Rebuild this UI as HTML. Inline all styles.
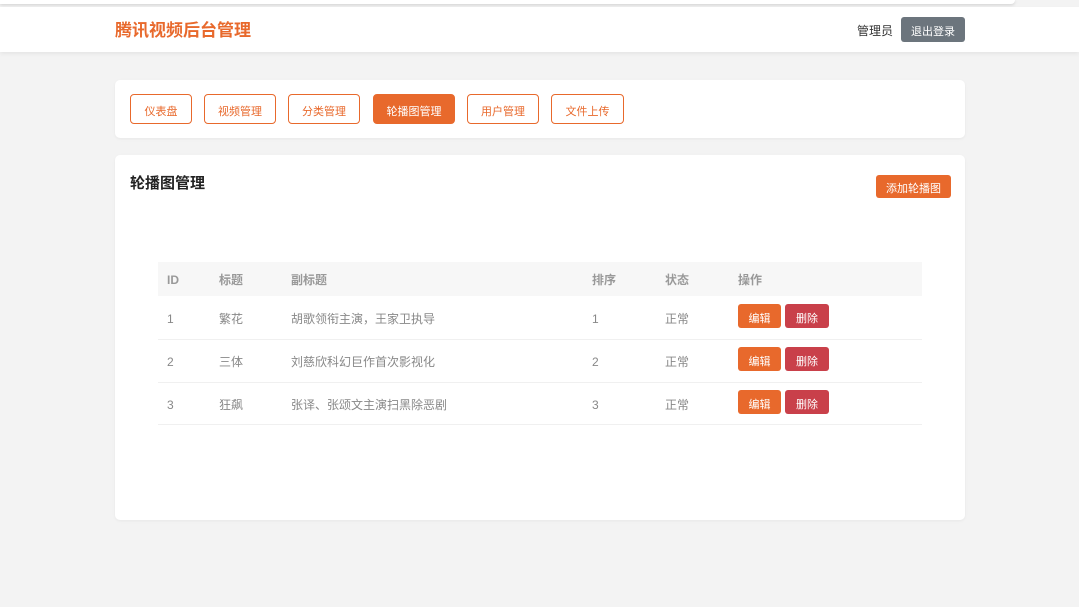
<!DOCTYPE html><html><head><meta charset="utf-8"><style>
*{margin:0;padding:0;box-sizing:border-box}
body{width:1079px;height:607px;background:#f3f3f3;font-family:"Liberation Sans","Noto Sans CJK SC",sans-serif;position:relative;overflow:hidden;color:#555}
.abs{position:absolute}
.top{left:0;top:0;width:1015px;height:4px;background:#fff;box-shadow:0 1px 3px rgba(0,0,0,.15);border-radius:0 0 4px 0}
.hdr{left:0;top:7px;width:1079px;height:45px;background:#fff;box-shadow:0 2px 4px rgba(0,0,0,.06)}
.logo{left:115px;top:20px;font-size:17px;font-weight:bold;color:#e8692c;line-height:22px}
.admin{left:857px;top:24px;font-size:12px;color:#333;line-height:14px}
.fc{display:flex;align-items:center;justify-content:center}
.logout{left:901px;top:17px;width:64px;height:25px;background:#6c757d;color:#fff;font-size:11px;border-radius:3px;padding-top:2px}
.card{background:#fff;border-radius:5px;box-shadow:0 1px 3px rgba(0,0,0,.05)}
.nb{top:94px;height:30px;border:1.5px solid #e8692c;border-radius:4px;color:#e8692c;font-size:11px;background:#fff;padding-top:3px}
.nb.on{background:#e8692c;color:#fff}
.tt{left:130px;top:172px;font-size:15px;font-weight:bold;color:#222}
.add{left:876px;top:175px;width:75px;height:23px;background:#e8692c;color:#fff;font-size:11px;border-radius:3px;padding-top:2px}
.th{left:158px;top:262px;width:764px;height:34px;background:#f7f7f7}
.c{font-size:12px;line-height:14px;color:#888}
.h{color:#999;font-weight:bold}
.line{left:158px;width:764px;height:1px;background:#f0f0f0}
.b{width:43px;height:24px;color:#fff;font-size:11px;border-radius:3px;padding-top:3px}
</style></head><body>
<div class="abs top"></div>
<div class="abs hdr"></div>
<div class="abs logo">腾讯视频后台管理</div>
<div class="abs admin">管理员</div>
<div class="abs logout fc">退出登录</div>
<div class="abs card" style="left:115px;top:80px;width:850px;height:58px"></div>
<div class="abs nb fc" style="left:130px;width:62px">仪表盘</div>
<div class="abs nb fc" style="left:204px;width:72px">视频管理</div>
<div class="abs nb fc" style="left:288px;width:72px">分类管理</div>
<div class="abs nb fc on" style="left:373px;width:82px">轮播图管理</div>
<div class="abs nb fc" style="left:467px;width:72px">用户管理</div>
<div class="abs nb fc" style="left:551px;width:73px">文件上传</div>
<div class="abs card" style="left:115px;top:155px;width:850px;height:365px"></div>
<div class="abs tt">轮播图管理</div>
<div class="abs add fc">添加轮播图</div>
<div class="abs th"></div>
<div class="abs c h" style="left:167px;top:273px">ID</div>
<div class="abs c h" style="left:219px;top:273px">标题</div>
<div class="abs c h" style="left:291px;top:273px">副标题</div>
<div class="abs c h" style="left:592px;top:273px">排序</div>
<div class="abs c h" style="left:665px;top:273px">状态</div>
<div class="abs c h" style="left:738px;top:273px">操作</div>

<div class="abs c" style="left:167px;top:312px">1</div>
<div class="abs c" style="left:219px;top:312px">繁花</div>
<div class="abs c" style="left:291px;top:312px">胡歌领衔主演，王家卫执导</div>
<div class="abs c" style="left:592px;top:312px">1</div>
<div class="abs c" style="left:665px;top:312px">正常</div>
<div class="abs b fc" style="left:738px;top:304px;background:#e8692c">编辑</div>
<div class="abs b fc" style="left:785px;top:304px;width:44px;background:#c9404a">删除</div>
<div class="abs line" style="top:339px"></div>

<div class="abs c" style="left:167px;top:355px">2</div>
<div class="abs c" style="left:219px;top:355px">三体</div>
<div class="abs c" style="left:291px;top:355px">刘慈欣科幻巨作首次影视化</div>
<div class="abs c" style="left:592px;top:355px">2</div>
<div class="abs c" style="left:665px;top:355px">正常</div>
<div class="abs b fc" style="left:738px;top:347px;background:#e8692c">编辑</div>
<div class="abs b fc" style="left:785px;top:347px;width:44px;background:#c9404a">删除</div>
<div class="abs line" style="top:382px"></div>

<div class="abs c" style="left:167px;top:398px">3</div>
<div class="abs c" style="left:219px;top:398px">狂飙</div>
<div class="abs c" style="left:291px;top:398px">张译、张颂文主演扫黑除恶剧</div>
<div class="abs c" style="left:592px;top:398px">3</div>
<div class="abs c" style="left:665px;top:398px">正常</div>
<div class="abs b fc" style="left:738px;top:390px;background:#e8692c">编辑</div>
<div class="abs b fc" style="left:785px;top:390px;width:44px;background:#c9404a">删除</div>
<div class="abs line" style="top:424px"></div>
</body></html>
